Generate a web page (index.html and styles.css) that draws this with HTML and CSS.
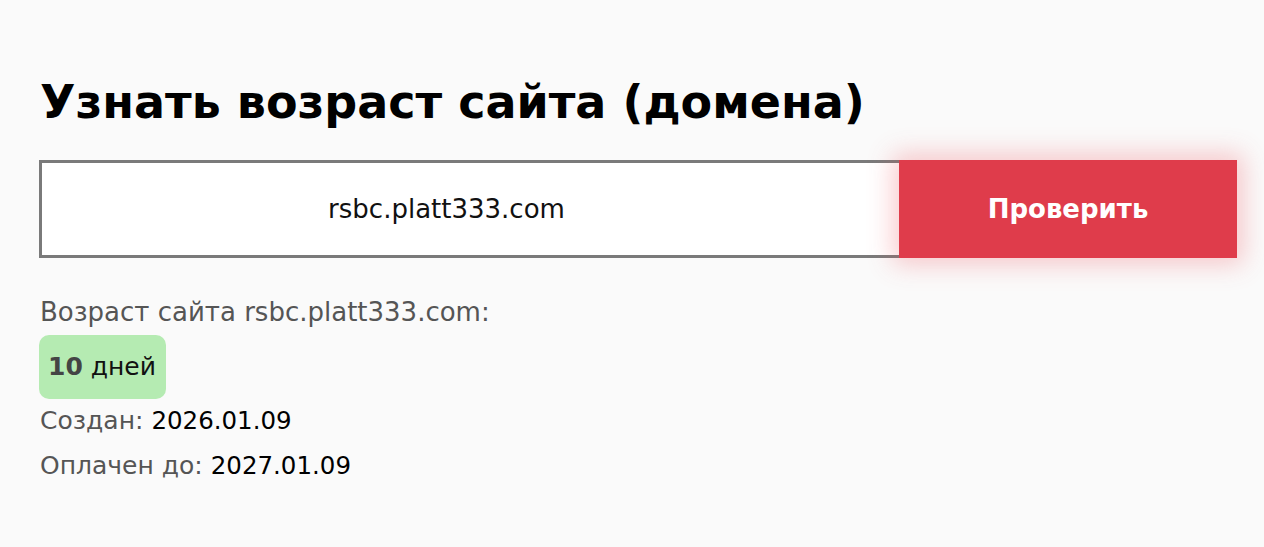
FILE: index.html
```html
<!DOCTYPE html>
<html lang="ru">
<head>
<meta charset="utf-8">
<title>Узнать возраст сайта</title>
<link rel="stylesheet" href="styles.css">
</head>
<body>
<main class="page">
  <h1 class="title">Узнать возраст сайта (домена)</h1>
  <form class="check">
    <input class="check-input" type="text" value="rsbc.platt333.com">
    <button class="check-btn" type="button">Проверить</button>
  </form>
  <div class="result">
    <p class="line age-label">Возраст сайта rsbc.platt333.com:</p>
    <div class="badge"><b class="badge-num">10</b> дней</div>
    <p class="line created">Создан: <span class="val">2026.01.09</span></p>
    <p class="line">Оплачен до: <span class="val">2027.01.09</span></p>
  </div>
</main>
</body>
</html>
```
FILE: styles.css
```css
html, body {
  margin: 0;
  padding: 0;
  background: #fafafa;
}
body {
  font-family: "DejaVu Sans", "Noto Sans", sans-serif;
  color: #000;
}
.page {
  width: 1198px;
  margin-left: 39px;
  padding-top: 72px;
}
.title {
  margin: 0 0 0 1px;
  font-size: 46px;
  font-weight: 700;
  line-height: 60px;
  color: #000;
}
.check {
  display: flex;
  margin-top: 28px;
  height: 98px;
}
.check-input {
  flex: 1;
  box-sizing: border-box;
  height: 98px;
  border: 3px solid #7a7a7a;
  border-right: 0;
  background: #fff;
  font-family: inherit;
  font-size: 26px;
  text-align: center;
  color: #111;
  outline: none;
  padding: 0 48px 0 0;
}
.check-btn {
  width: 338px;
  height: 98px;
  border: 0;
  background: #df3c4b;
  color: #fff;
  font-family: inherit;
  font-size: 26px;
  font-weight: 700;
  box-shadow: 0 0 24px 6px rgba(240, 80, 90, 0.3);
  cursor: pointer;
}
.result {
  margin-top: 39px;
  padding-left: 1px;
}
.line {
  margin: 0;
  font-size: 25px;
  line-height: 30px;
  color: #555;
}
.age-label {
  font-size: 26px;
}
.val {
  color: #000;
  font-size: 24.5px;
}
.badge {
  display: inline-block;
  margin: 8px 0 7px -1px;
  padding: 0 10px 0 9px;
  height: 64px;
  line-height: 64px;
  border-radius: 10px;
  background: #b5ebb2;
  font-size: 25px;
  color: #111;
}
.badge-num {
  color: #444;
}
.created {
  margin-bottom: 15px;
}
```
